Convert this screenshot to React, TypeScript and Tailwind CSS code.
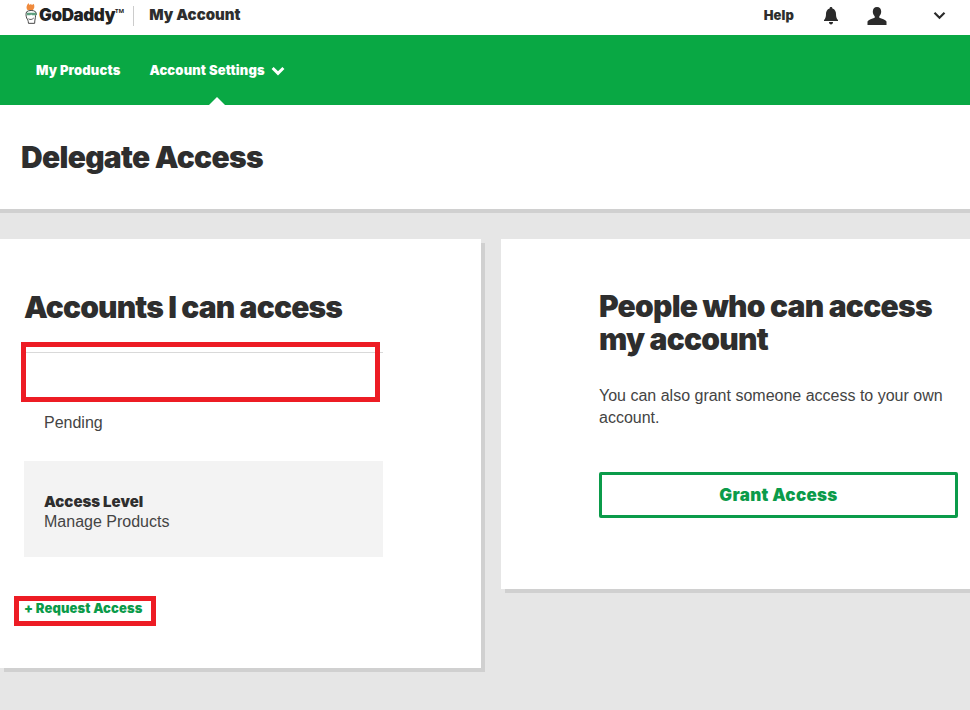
import React from "react";

const head = "font-['Inter',sans-serif] font-black text-[#2e2e2e]";
const body = "font-['Liberation_Sans',Arial,sans-serif] text-[#444444]";

function Mascot() {
  return (
    <svg width="16" height="24" viewBox="0 0 18 25" className="mb-[3px] shrink-0">
      <path d="M4 8C2 5 3 3 5 0c1 2 1 3 3 1 0 2 2 1 3 0 1 3 1 5-1 7z" fill="#ef8a3c" />
      <path d="M3 10c2-2 8-2 10 0l1 3-1 1c0 3-1 5-1 9H5c0-3-1-4-2-6-1-3-1-5 0-7z" fill="#fff" stroke="#444" strokeWidth="1.100" />
      <path d="M3 11h11v3H9l-1-1-1 1H3z" fill="#5f9f80" />
      <path d="M5 18c2 1 4 1 6-1" fill="none" stroke="#444" strokeWidth="1" />
    </svg>
  );
}

function Bell() {
  return (
    <svg width="14" height="18" viewBox="0 0 14 18" fill="#2b2b2b">
      <path d="M7 0c1 0 1.400.6 1.400 1.400C11 2.200 12 4.500 12 7c0 3 .6 4.600 2 6v1H0v-1c1.400-1.400 2-3 2-6 0-2.500 1-4.800 3.600-5.600C5.600.6 6 0 7 0z" />
      <path d="M5 15h4c0 1.400-.8 2.400-2 2.400S5 16.400 5 15z" />
    </svg>
  );
}

function User() {
  return (
    <svg width="20" height="18" viewBox="0 0 20 18" fill="#2b2b2b">
      <path d="M10 0c2.700 0 4.200 2 4.200 4.600 0 2-.8 3.600-1.900 4.700v1.500c2.600 1 6.100 1.900 7.200 3.700V18H.5v-3.500c1.100-1.800 4.600-2.700 7.200-3.700V9.300C6.600 8.200 5.800 6.600 5.800 4.600 5.800 2 7.300 0 10 0z" />
    </svg>
  );
}

function Chevron({ color, size, weight }: { color: string; size: number; weight: number }) {
  return (
    <svg width={size} height={size * 0.7} viewBox="0 0 14 10" fill="none" stroke={color} strokeWidth={weight}>
      <path d="M1.500 2 7 7.500 12.500 2" />
    </svg>
  );
}

export default function App() {
  return (
    <div className="relative h-[710px] w-[970px] overflow-hidden bg-[#e6e6e6]">
      <header className="flex h-[35px] items-center bg-white pb-[4px] pl-[24px]">
        <Mascot />
        <span className="ml-[-1px] font-['Inter',sans-serif] text-[17px] font-black tracking-[-0.4px] text-[#222222]">GoDaddy</span>
        <span className="mb-[8px] text-[6px] font-bold text-[#222222]">TM</span>
        <span className="ml-[9px] h-[20px] w-px bg-[#cccccc]" />
        <span className={`ml-[15px] text-[15px] ${head}`}>My Account</span>
        <span className={`ml-auto text-[13px] tracking-[0.1px] ${head}`}>Help</span>
        <span className="ml-[30px] flex"><Bell /></span>
        <span className="ml-[29px] flex"><User /></span>
        <span className="ml-[46px] mr-[24px] flex"><Chevron color="#2b2b2b" size={13} weight={2.4} /></span>
      </header>

      <nav className="relative flex h-[70px] items-center bg-[#09a844] pl-[36px] pt-[2px] font-['Inter',sans-serif] text-[13px] font-black tracking-[0.15px] text-white">
        <span>My Products</span>
        <span className="ml-[29px]">Account Settings</span>
        <span className="ml-[6px] flex"><Chevron color="#ffffff" size={14} weight={3} /></span>
        <span className="absolute bottom-0 left-[209px] h-0 w-0 border-x-[8px] border-b-[8px] border-x-transparent border-b-white" />
      </nav>

      <section className="flex h-[108px] items-center border-b-4 border-[#d0d0d0] bg-white pl-[21px]">
        <h1 className={`text-[30px] leading-none tracking-[-0.7px] ${head}`}>Delegate Access</h1>
      </section>

      <main className="mt-[26px] flex items-start">
        <div className="h-[429px] w-[481px] shrink-0 bg-white pl-[24px] pt-[50px] shadow-[4px_4px_0_#d0d0d0]">
          <h2 className={`text-[30px] leading-[36px] tracking-[-0.85px] ${head}`}>Accounts I can access</h2>
          <div className="mt-[27px] h-px w-[359px] bg-[#d9d9d9]" />
          <p className={`mt-[60px] pl-[20px] text-[16px] leading-[20px] ${body}`}>Pending</p>
          <div className="mt-[28px] h-[96px] w-[359px] bg-[#f3f3f3] pl-[20px] pt-[31px]">
            <p className={`text-[15px] leading-[20px] ${head}`}>Access Level</p>
            <p className={`text-[16px] leading-[20px] ${body}`}>Manage Products</p>
          </div>
          <p className="mt-[43px] font-['Inter',sans-serif] text-[13px] leading-[16px] font-black tracking-[0.1px] text-[#0b9b4a]">+ Request Access</p>
        </div>

        <div className="ml-[20px] h-[350px] flex-1 bg-white pl-[98px] pr-[12px] pt-[51px] shadow-[4px_4px_0_#d0d0d0]">
          <h2 className={`text-[30px] leading-[33px] tracking-[-0.75px] ${head}`}>People who can access<br />my account</h2>
          <p className={`mt-[29px] text-[16px] leading-[22px] ${body}`}>You can also grant someone access to your own account.</p>
          <button className="mt-[43px] h-[46px] w-full rounded-[2px] border-[3px] border-[#0b9b4a] pt-[1px] font-['Inter',sans-serif] text-[17px] font-black tracking-[0.3px] text-[#0b9b4a]">Grant Access</button>
        </div>
      </main>

      <div className="absolute left-[21px] top-[342px] h-[60px] w-[359px] border-[5px] border-[#ed1c24]" />
      <div className="absolute left-[14px] top-[596px] h-[30px] w-[142px] border-[5px] border-[#ed1c24]" />
    </div>
  );
}
